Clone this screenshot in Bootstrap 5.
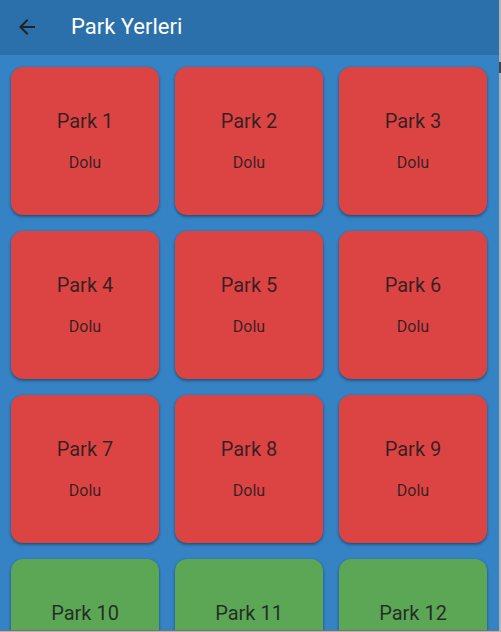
<!DOCTYPE html>
<html lang="tr">
<head>
<meta charset="utf-8">
<meta name="viewport" content="width=device-width, initial-scale=1">
<title>Park Yerleri</title>
<link href="https://cdn.jsdelivr.net/npm/bootstrap@5.3.0/dist/css/bootstrap.min.css" rel="stylesheet">
<style>
body { font-family: Roboto, "Liberation Sans", sans-serif; background: #b4b4b4 linear-gradient(#444, #444) right 62px / 2px 11px no-repeat; }
.app-frame { background: #3582c4; border-bottom: 1px solid #77706f; margin: 0 2px 1px 0; }
.app-bar { background: #2b70ab; height: 55px; padding: 0 15px 2px; gap: 32px; }
.back-btn { width: 24px; height: 24px; color: #1f2327; line-height: 1; }
.app-title { font-size: 22px; line-height: 28px; font-weight: 400; }
.spots { display: grid; grid-template-columns: repeat(3, 1fr); gap: 16px; padding: 12px 12px 12px 11px; }
.spot { aspect-ratio: 1; padding-top: 40px; border-radius: 12px; color: rgba(29, 27, 30, .88); box-shadow: 0 1px 3px rgba(0, 0, 0, .25), 0 2px 3px rgba(0, 0, 0, .2); gap: 16px; }
.spot-full { background: #dc4443; }
.spot-free { background: #5ba755; }
.spot-name { font-size: 20px; line-height: 28px; font-weight: 400; }
.spot-state { font-size: 16px; line-height: 24px; }
</style>
</head>
<body class="vh-100 overflow-hidden d-flex flex-column">
<div class="app-frame flex-fill d-flex flex-column overflow-hidden">
  <header class="app-bar d-flex align-items-center flex-shrink-0">
    <button type="button" class="back-btn btn p-0 border-0 d-flex" aria-label="Geri">
      <svg width="24" height="24" viewBox="0 0 24 24" fill="currentColor" aria-hidden="true"><path d="M20 11H7.83l5.59-5.59L12 4l-8 8 8 8 1.41-1.41L7.83 13H20v-2z"/></svg>
    </button>
    <h1 class="app-title text-white m-0">Park Yerleri</h1>
  </header>
  <main class="spots overflow-hidden">
    <section class="spot spot-full d-flex flex-column align-items-center"><h2 class="spot-name m-0">Park 1</h2><p class="spot-state m-0">Dolu</p></section>
    <section class="spot spot-full d-flex flex-column align-items-center"><h2 class="spot-name m-0">Park 2</h2><p class="spot-state m-0">Dolu</p></section>
    <section class="spot spot-full d-flex flex-column align-items-center"><h2 class="spot-name m-0">Park 3</h2><p class="spot-state m-0">Dolu</p></section>
    <section class="spot spot-full d-flex flex-column align-items-center"><h2 class="spot-name m-0">Park 4</h2><p class="spot-state m-0">Dolu</p></section>
    <section class="spot spot-full d-flex flex-column align-items-center"><h2 class="spot-name m-0">Park 5</h2><p class="spot-state m-0">Dolu</p></section>
    <section class="spot spot-full d-flex flex-column align-items-center"><h2 class="spot-name m-0">Park 6</h2><p class="spot-state m-0">Dolu</p></section>
    <section class="spot spot-full d-flex flex-column align-items-center"><h2 class="spot-name m-0">Park 7</h2><p class="spot-state m-0">Dolu</p></section>
    <section class="spot spot-full d-flex flex-column align-items-center"><h2 class="spot-name m-0">Park 8</h2><p class="spot-state m-0">Dolu</p></section>
    <section class="spot spot-full d-flex flex-column align-items-center"><h2 class="spot-name m-0">Park 9</h2><p class="spot-state m-0">Dolu</p></section>
    <section class="spot spot-free d-flex flex-column align-items-center"><h2 class="spot-name m-0">Park 10</h2></section>
    <section class="spot spot-free d-flex flex-column align-items-center"><h2 class="spot-name m-0">Park 11</h2></section>
    <section class="spot spot-free d-flex flex-column align-items-center"><h2 class="spot-name m-0">Park 12</h2></section>
  </main>
</div>
<script src="https://cdn.jsdelivr.net/npm/bootstrap@5.3.0/dist/js/bootstrap.bundle.min.js"></script>
</body>
</html>
